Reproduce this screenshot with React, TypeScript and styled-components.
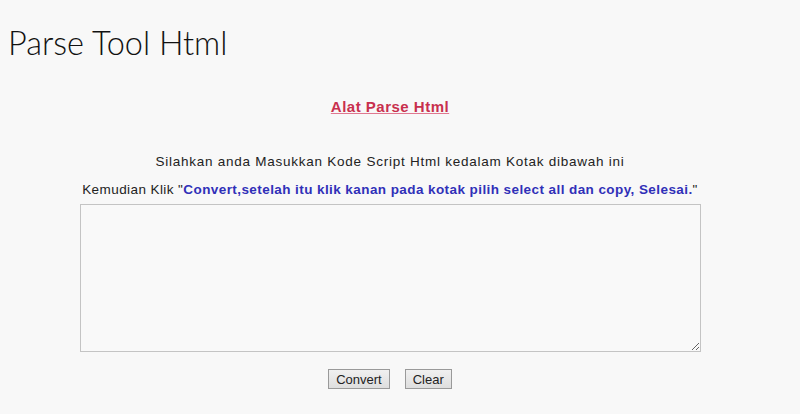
import styled, { createGlobalStyle } from "styled-components";

const GlobalStyle = createGlobalStyle`
  html, body {
    margin: 0;
    background: #f8f8f8;
  }
  body {
    padding: 8px;
    font-family: "Liberation Sans", Arial, sans-serif;
  }
`;

const Title = styled.h1`
  margin: 15px 0 0;
  font-family: Lato, "Open Sans", sans-serif;
  font-weight: 300;
  font-size: 32.5px;
  line-height: 40px;
  color: #111;
`;

const Main = styled.main`
  margin-right: 20px;
  text-align: center;
`;

const ToolLink = styled.a`
  display: inline-block;
  margin-top: 35px;
  font-size: 15px;
  font-weight: 700;
  letter-spacing: 0.5px;
  color: #c8304e;
  text-decoration: underline;
  text-decoration-color: #e07890;
`;

const Line = styled.p<{ $top: number; $spacing: number }>`
  margin: ${(p) => p.$top}px 0 0;
  font-size: 13.5px;
  line-height: 16px;
  color: #222;
  letter-spacing: ${(p) => p.$spacing}px;
`;

const Blue = styled.b`
  color: #3030b8;
`;

const Box = styled.textarea`
  display: block;
  margin: 6px auto 0;
  width: 621px;
  height: 148px;
  box-sizing: border-box;
  border: 1px solid #c4c4c4;
  background: #f9f9f9;
`;

const Buttons = styled.div`
  display: flex;
  justify-content: center;
  gap: 15px;
  margin-top: 17px;
`;

const Button = styled.button`
  height: 20px;
  padding: 0 7px;
  font-family: "Liberation Sans", Arial, sans-serif;
  font-size: 13px;
  color: #222;
  background: linear-gradient(#f0f0f0, #dedede);
  border: 1px solid #9a9a9a;
  border-radius: 0;
`;

export default function App() {
  return (
    <>
      <GlobalStyle />
      <Title>Parse Tool Html</Title>
      <Main>
        <ToolLink href="#">Alat Parse Html</ToolLink>
        <Line $top={38} $spacing={0.75}>
          Silahkan anda Masukkan Kode Script Html kedalam Kotak dibawah ini
        </Line>
        <Line $top={12} $spacing={0.42}>
          Kemudian Klik "<Blue>Convert,setelah itu klik kanan pada kotak pilih select all dan copy, Selesai.</Blue>"
        </Line>
        <Box />
        <Buttons>
          <Button>Convert</Button>
          <Button>Clear</Button>
        </Buttons>
      </Main>
    </>
  );
}
